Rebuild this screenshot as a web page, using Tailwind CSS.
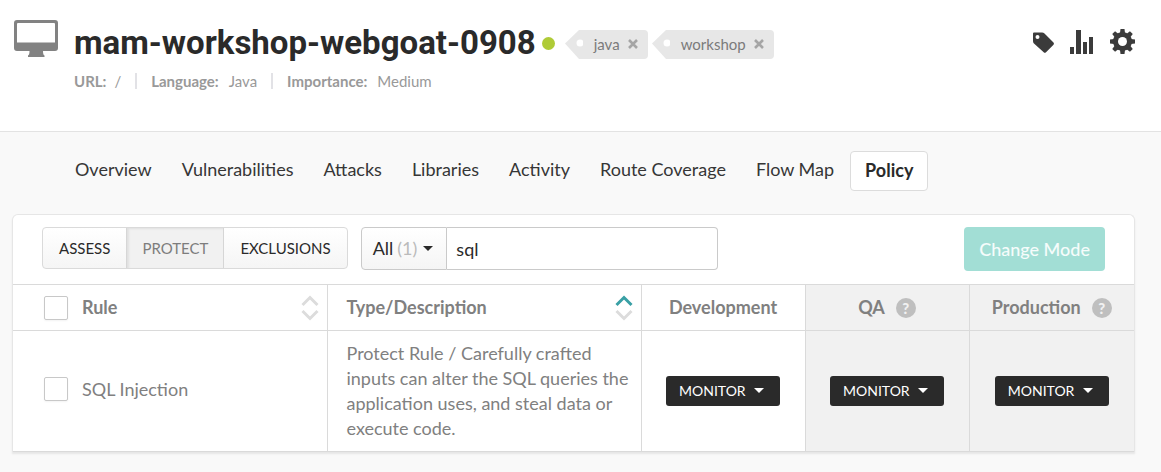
<!DOCTYPE html>
<html lang="en">
<head>
<meta charset="utf-8">
<meta name="viewport" content="width=device-width, initial-scale=1">
<title>mam-workshop-webgoat-0908</title>
<script src="https://cdn.jsdelivr.net/npm/@tailwindcss/browser@4"></script>
</head>
<body class="min-h-screen bg-[#f9f9f9] font-['Lato',sans-serif] text-[#2a2a2a]">
<header class="flex items-start border-b border-[#e3e3e3] bg-white pt-5 pr-[25px] pb-10 pl-3.5">
  <svg class="mr-4 h-[37px] w-11 shrink-0" viewBox="0 0 44 37" fill="#828282" aria-hidden="true">
    <path fill-rule="evenodd" d="M3 0h38a3 3 0 0 1 3 3v25a3 3 0 0 1-3 3H29q0 4 1.500 4.500V37H14v-1.500q1.500-.5 1.500-4.500H3a3 3 0 0 1-3-3V3a3 3 0 0 1 3-3zM4 3a1 1 0 0 0-1 1v18.500h38V4a1 1 0 0 0-1-1z"/>
  </svg>
  <div class="grow">
    <div class="flex items-center">
      <h1 class="font-['Roboto',sans-serif] text-[33px] leading-[46px] font-bold">mam-workshop-webgoat-0908</h1>
      <span class="ml-1.5 size-[13px] rounded-full bg-[#afcb37]"></span>
      <ul class="ml-2.5 flex gap-1 pt-0.5 text-[15px] text-[#7b7b7b]">
        <li class="flex h-[29px] items-center">
          <svg class="h-[29px] w-[18px]" viewBox="0 0 18 29" aria-hidden="true"><path d="M18 0H14L0 13.500 14 29H18z" fill="#e7e7e7"/><circle cx="15" cy="13" r="3.500" fill="#fff"/></svg>
          <span class="flex h-full items-center gap-2 rounded-r bg-[#e7e7e7] pr-2.5 pl-[11px]">java
            <button type="button" aria-label="Remove java"><svg class="size-2.5" viewBox="0 0 10 10" stroke="#a5a5a5" stroke-width="2.600"><path d="M1 1l8 8M9 1L1 9"/></svg></button></span>
        </li>
        <li class="flex h-[29px] items-center">
          <svg class="h-[29px] w-[18px]" viewBox="0 0 18 29" aria-hidden="true"><path d="M18 0H14L0 13.500 14 29H18z" fill="#e7e7e7"/><circle cx="15" cy="13" r="3.500" fill="#fff"/></svg>
          <span class="flex h-full items-center gap-2 rounded-r bg-[#e7e7e7] pr-2.5 pl-[11px]">workshop
            <button type="button" aria-label="Remove workshop"><svg class="size-2.5" viewBox="0 0 10 10" stroke="#a5a5a5" stroke-width="2.600"><path d="M1 1l8 8M9 1L1 9"/></svg></button></span>
        </li>
      </ul>
    </div>
    <div class="mt-[5px] flex items-center text-[15px] leading-5 text-[#999]">
      <span><b class="mr-2">URL:</b>/</span>
      <span class="mx-3.5 h-4 w-0.5 bg-[#e2e2e6]"></span>
      <span><b class="mr-2.5">Language:</b>Java</span>
      <span class="mx-3.5 h-4 w-0.5 bg-[#e2e2e6]"></span>
      <span><b class="mr-2.5">Importance:</b>Medium</span>
    </div>
  </div>
  <div class="flex items-center gap-[15px] pt-2">
    <button type="button" aria-label="Tags"><svg class="size-6" viewBox="0 0 24 24" fill="#3b3b3b"><path fill-rule="evenodd" d="M3 2.500h8q1.500 0 2.500 1l9 9q1 1.200 0 2.300l-7.500 7.500q-1.200 1-2.300 0l-10-9Q2 12.500 2 11V3.500q0-1 1-1zM6.500 5a2 2 0 1 0 0 4 2 2 0 0 0 0-4z"/></svg></button>
    <button type="button" aria-label="Statistics"><svg class="h-[26px] w-6" viewBox="0 0 24 26" fill="#3b3b3b"><path d="M0 18h4v7H0zM6 1h5v24H6zM13 13h4v12h-4zM19 8h4v17h-4z"/></svg></button>
    <button type="button" aria-label="Settings"><svg class="size-[27px]" viewBox="0 0 27 27"><g fill="#3b3b3b"><circle cx="13.500" cy="13.500" r="9.500"/><path id="teeth" d="M11 5L11.500 1h4l.5 4v17l-.5 4h-4l-.5-4z"/><use href="#teeth" transform="rotate(45 13.500 13.500)"/><use href="#teeth" transform="rotate(90 13.500 13.500)"/><use href="#teeth" transform="rotate(135 13.500 13.500)"/></g><circle cx="13.500" cy="13.500" r="4.500" fill="#fff"/></svg></button>
  </div>
</header>

<nav class="flex flex-wrap gap-0.5 pt-[19px] pl-[61px] text-lg leading-9 text-[#363636]">
  <a href="#overview" class="h-10 px-3.5">Overview</a>
  <a href="#vulnerabilities" class="h-10 px-3.5">Vulnerabilities</a>
  <a href="#attacks" class="h-10 px-3.5">Attacks</a>
  <a href="#libraries" class="h-10 px-3.5">Libraries</a>
  <a href="#activity" class="h-10 px-3.5">Activity</a>
  <a href="#routes" class="h-10 px-3.5">Route Coverage</a>
  <a href="#flow" class="h-10 px-3.5">Flow Map</a>
  <a href="#policy" aria-current="page" class="h-10 rounded border border-[#dcdcdc] bg-white px-3.5 font-bold text-[#2a2a2a]">Policy</a>
</nav>

<main class="mt-[23px] mr-[26px] ml-3 rounded-t-md border border-b-0 border-[#e6e6e6] bg-white shadow-[0_2px_2px_#e6e6e6]">
  <div class="flex items-start px-[29px] pt-3 pb-[13px]">
    <div class="flex rounded-sm border border-[#dadada] bg-linear-to-b from-white to-[#f5f5f5] text-[15px] leading-10">
      <button type="button" class="px-4">ASSESS</button>
      <button type="button" aria-pressed="true" class="border-x border-[#d6d6d6] bg-[#f1f1f1] px-[15px] text-[#7d7d7d] shadow-[inset_2px_1px_2px_#e0e0e0]">PROTECT</button>
      <button type="button" class="px-4">EXCLUSIONS</button>
    </div>
    <div class="ml-[13px] flex text-lg leading-[41px]">
      <button type="button" aria-haspopup="menu" class="flex items-center rounded-l border border-[#cacaca] bg-linear-to-b from-white to-[#f5f5f5] pr-[13px] pl-[11px]">All <span class="ml-1 text-[#bbb]">(1)</span>
        <svg class="ml-1.5 h-[5px] w-2.5" viewBox="0 0 10 5" fill="#2a2a2a"><path d="M0 0h10L5 5z"/></svg></button>
      <input type="text" value="sql" aria-label="Search rules" class="h-[43px] w-[271px] rounded-r border border-l-0 border-[#cacaca] bg-white px-[9px]">
    </div>
    <button type="button" class="ml-auto h-11 rounded bg-[#a2ded5] px-[15px] text-lg font-medium text-white/90">Change Mode</button>
  </div>
  <table class="w-full table-fixed border-collapse border-y border-[#dadada] text-lg leading-[25px] text-[#808080]">
    <colgroup><col><col><col class="w-[164px]"><col class="w-[164px]"><col class="w-[165px]"></colgroup>
    <thead>
      <tr class="h-[46px] border-b border-[#dadada]">
        <th class="border-r border-[#dadada] pr-2 pl-[31px]">
          <div class="flex items-center">
            <input type="checkbox" aria-label="Select all rules" class="mr-3.5 size-6 appearance-none rounded-xs border border-[#c8c8c8] bg-white shadow-xs">Rule
            <svg class="ml-auto h-[26px] w-[18px]" viewBox="0 0 18 26" fill="none" stroke-width="3" stroke="#dcdcdc"><path d="M1.500 10L9 2.500l7.500 7.500"/><path d="M1.500 16L9 23.500l7.500-7.500"/></svg>
          </div>
        </th>
        <th aria-sort="ascending" class="border-r border-[#dadada] pr-2 pl-[19px]">
          <div class="flex items-center">Type/Description
            <svg class="ml-auto h-[26px] w-[18px]" viewBox="0 0 18 26" fill="none" stroke-width="3"><path stroke="#39a0a5" d="M1.500 10L9 2.500l7.500 7.500"/><path stroke="#dcdcdc" d="M1.500 16L9 23.500l7.500-7.500"/></svg>
          </div>
        </th>
        <th class="border-r border-[#dadada]">Development</th>
        <th class="border-r border-[#dadada] bg-[#f1f1f1]">
          <div class="flex items-center justify-center gap-[11px]">QA
            <button type="button" aria-label="About QA" class="size-5 rounded-full bg-[#bfbfbf] text-center text-[15px] leading-5 font-black text-[#f1f1f1]">?</button></div>
        </th>
        <th class="bg-[#f1f1f1]">
          <div class="flex items-center justify-center gap-[11px]">Production
            <button type="button" aria-label="About Production" class="size-5 rounded-full bg-[#bfbfbf] text-center text-[15px] leading-5 font-black text-[#f1f1f1]">?</button></div>
        </th>
      </tr>
    </thead>
    <tbody>
      <tr>
        <td class="border-r border-[#dadada] pb-1 pl-[31px]">
          <label class="flex items-center"><input type="checkbox" class="mr-3.5 size-6 appearance-none rounded-xs border border-[#c8c8c8] bg-white shadow-xs">SQL Injection</label>
        </td>
        <td class="border-r border-[#dadada] py-2.5 pr-2 pl-[19px]">Protect Rule / Carefully crafted inputs can alter the SQL queries the application uses, and steal data or execute code.</td>
        <td class="border-r border-[#dadada] text-center">
          <div class="relative mx-auto h-[30px] w-[114px]">
            <select aria-label="Development mode" class="block size-full appearance-none rounded-[3px] bg-[#2a2a2a] px-[13px] text-sm text-white"><option>MONITOR</option></select>
            <svg class="pointer-events-none absolute top-3 right-4 h-[5px] w-2.5" viewBox="0 0 10 5" fill="#fff"><path d="M0 0h10L5 5z"/></svg>
          </div>
        </td>
        <td class="border-r border-[#dadada] bg-[#f1f1f1]">
          <div class="relative mx-auto h-[30px] w-[114px]">
            <select aria-label="QA mode" class="block size-full appearance-none rounded-[3px] bg-[#2a2a2a] px-[13px] text-sm text-white"><option>MONITOR</option></select>
            <svg class="pointer-events-none absolute top-3 right-4 h-[5px] w-2.5" viewBox="0 0 10 5" fill="#fff"><path d="M0 0h10L5 5z"/></svg>
          </div>
        </td>
        <td class="bg-[#f1f1f1]">
          <div class="relative mx-auto h-[30px] w-[114px]">
            <select aria-label="Production mode" class="block size-full appearance-none rounded-[3px] bg-[#2a2a2a] px-[13px] text-sm text-white"><option>MONITOR</option></select>
            <svg class="pointer-events-none absolute top-3 right-4 h-[5px] w-2.5" viewBox="0 0 10 5" fill="#fff"><path d="M0 0h10L5 5z"/></svg>
          </div>
        </td>
      </tr>
    </tbody>
  </table>
</main>
</body>
</html>
